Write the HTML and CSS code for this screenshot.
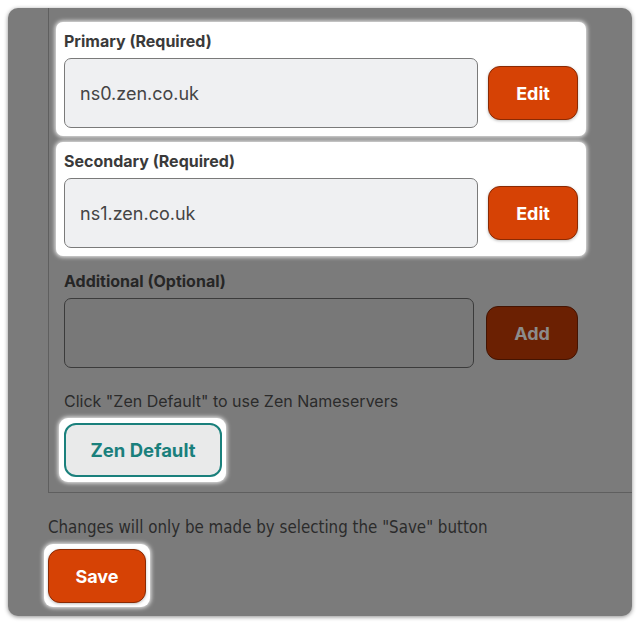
FILE: index.html
```html
<!DOCTYPE html>
<html>
<head>
<meta charset="utf-8">
<link rel="stylesheet" href="styles.css">
</head>
<body>
<div class="panel">
  <div class="fieldset">
    <div class="group highlight">
      <div class="label">Primary (Required)</div>
      <div class="row">
        <div class="input">ns0.zen.co.uk</div>
        <button class="btn">Edit</button>
      </div>
    </div>
    <div class="group highlight">
      <div class="label">Secondary (Required)</div>
      <div class="row">
        <div class="input">ns1.zen.co.uk</div>
        <button class="btn">Edit</button>
      </div>
    </div>
    <div class="group dim">
      <div class="label">Additional (Optional)</div>
      <div class="row">
        <div class="input input-dim"></div>
        <button class="btn btn-dim">Add</button>
      </div>
    </div>
    <p class="hint">Click "Zen Default" to use Zen Nameservers</p>
    <div class="zen-wrap">
      <button class="btn-zen">Zen Default</button>
    </div>
  </div>
  <p class="note">Changes will only be made by selecting the "Save" button</p>
  <div class="save-wrap">
    <button class="btn btn-save">Save</button>
  </div>
</div>
</body>
</html>
```

FILE: styles.css
```css
html, body {
  margin: 0;
  padding: 0;
  background: #ffffff;
}
body {
  padding: 8px;
  font-family: Inter, "Noto Sans", sans-serif;
}
.panel {
  background: #7b7b7b;
  border-radius: 10px;
  box-shadow: 0 1px 4px rgba(0, 0, 0, 0.45);
  height: 608px;
  padding-left: 40px;
  box-sizing: border-box;
  overflow: hidden;
}
.fieldset {
  border-left: 1px solid #5f5f5f;
  border-bottom: 1px solid #5f5f5f;
  padding: 14px 54px 10px 15px;
}
.group {
  padding: 8px;
  margin: 0 -8px 6px;
  border-radius: 7px;
}
.highlight {
  background: #ffffff;
  box-shadow: 0 0 4px 1px rgba(255, 255, 255, 0.9);
}
.label {
  font-size: 16px;
  font-weight: 700;
  line-height: 22px;
  color: #3a3a3a;
  margin-bottom: 6px;
}
.dim .label {
  color: #262626;
}
.row {
  display: flex;
  align-items: center;
  gap: 10px;
}
.input {
  flex: 1;
  height: 70px;
  box-sizing: border-box;
  border: 1px solid #7a7a7a;
  border-radius: 7px;
  background: #eff0f2;
  padding-left: 15px;
  display: flex;
  align-items: center;
  font-size: 18px;
  color: #444;
}
.input-dim {
  background: #787878;
  border-color: #3b3b3b;
  margin-right: 2px;
}
.btn {
  width: 90px;
  height: 54px;
  box-sizing: border-box;
  border: 1px solid #8a2a04;
  border-radius: 12px;
  background: #d64205;
  color: #ffffff;
  font-family: Inter, "Noto Sans", sans-serif;
  font-size: 18px;
  font-weight: 700;
  box-shadow: 0 1px 3px rgba(0, 0, 0, 0.25);
  padding: 0;
}
.btn-dim {
  width: 92px;
  background: #6b2002;
  border-color: #441402;
  color: #8c8c8c;
  box-shadow: none;
}
.hint {
  margin: 14px 0 6px;
  font-size: 16px;
  line-height: 22px;
  color: #2b2b2b;
}
.zen-wrap {
  display: inline-block;
  background: #ffffff;
  padding: 5px 4px 5px 5px;
  margin-left: -5px;
  border-radius: 9px;
  box-shadow: 0 0 4px 1px rgba(255, 255, 255, 0.9);
}
.btn-zen {
  display: block;
  width: 158px;
  height: 54px;
  box-sizing: border-box;
  border: 2px solid #1a807c;
  border-radius: 12px;
  background: #e9eaea;
  color: #1a807c;
  font-family: Inter, "Noto Sans", sans-serif;
  font-size: 18.5px;
  font-weight: 700;
  padding: 0;
}
.note {
  margin: 23px 0 6px;
  font-family: "DejaVu Sans", sans-serif;
  font-stretch: condensed;
  font-size: 16.8px;
  line-height: 22px;
  color: #2b2b2b;
}
.save-wrap {
  display: inline-block;
  background: #ffffff;
  padding: 5px 4px 4px 4px;
  margin-left: -4px;
  border-radius: 9px;
  box-shadow: 0 0 4px 1px rgba(255, 255, 255, 0.9);
}
.btn-save {
  display: block;
  width: 98px;
}
```
